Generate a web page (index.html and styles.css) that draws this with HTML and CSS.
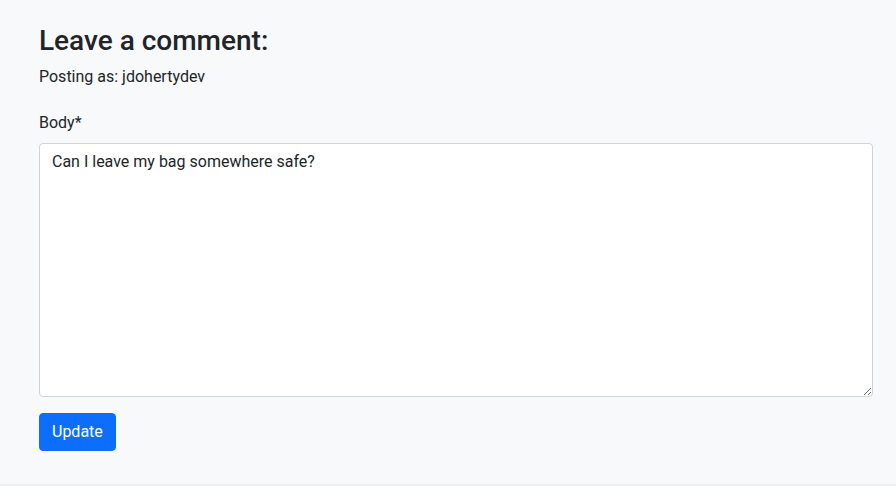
FILE: index.html
```html
<!DOCTYPE html>
<html lang="en">
<head>
<meta charset="utf-8">
<title>Leave a comment</title>
<link rel="stylesheet" href="styles.css">
</head>
<body>
<main class="page">
  <h3 class="title">Leave a comment:</h3>
  <p class="posting">Posting as: jdohertydev</p>
  <form class="comment-form">
    <label class="form-label" for="body">Body*</label>
    <textarea id="body" class="form-control" rows="10">Can I leave my bag somewhere safe?</textarea>
    <button type="button" class="btn">Update</button>
  </form>
</main>
<div class="bottom-edge"></div>
</body>
</html>
```
FILE: styles.css
```css
* { box-sizing: border-box; }
html, body { margin: 0; padding: 0; }
body {
  background: #f8f9fa;
  color: #212529;
  font-family: Roboto, "Liberation Sans", sans-serif;
  font-size: 16px;
  line-height: 1.5;
  height: 486px;
  display: flex;
  flex-direction: column;
  overflow: hidden;
}
.page {
  padding: 23.5px 23px 0 39px;
  flex: 1;
}
.title {
  margin: 0 0 8px;
  font-size: 28px;
  font-weight: 500;
  line-height: 1.2;
}
.posting {
  margin: 0 0 22px;
}
.comment-form {
  display: flex;
  flex-direction: column;
  align-items: flex-start;
}
.form-label {
  margin-bottom: 8px;
}
.form-control {
  display: block;
  width: 100%;
  height: 254px;
  padding: 6px 12px;
  font-family: inherit;
  font-size: 16px;
  line-height: 1.5;
  color: #212529;
  background: #fff;
  border: 1px solid #ced4da;
  border-radius: 4px;
  resize: vertical;
  margin: 0;
}
.btn {
  margin-top: 16px;
  padding: 6px 12px;
  font-family: inherit;
  font-size: 16px;
  line-height: 1.5;
  color: #fff;
  background: #0d6efd;
  border: 1px solid #0d6efd;
  border-radius: 4px;
  cursor: pointer;
}
.bottom-edge {
  height: 2px;
  background: #eff0f1;
}
```
